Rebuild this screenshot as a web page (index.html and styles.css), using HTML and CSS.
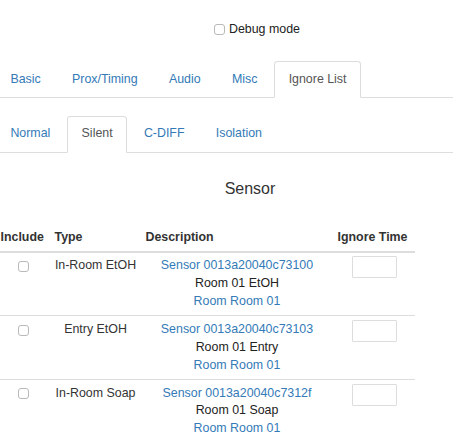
FILE: index.html
```html
<!DOCTYPE html>
<html lang="en">
<head>
<meta charset="utf-8">
<title>Ignore List</title>
<link rel="stylesheet" href="styles.css">
</head>
<body>
<div class="page">
  <label class="debug"><input type="checkbox" class="cb"><span>Debug mode</span></label>

  <ul class="tabs tabs-main">
    <li><a href="#">Basic</a></li>
    <li><a href="#">Prox/Timing</a></li>
    <li><a href="#">Audio</a></li>
    <li><a href="#">Misc</a></li>
    <li class="active"><a href="#">Ignore List</a></li>
  </ul>

  <ul class="tabs tabs-sub">
    <li><a href="#">Normal</a></li>
    <li class="active"><a href="#">Silent</a></li>
    <li><a href="#">C-DIFF</a></li>
    <li><a href="#">Isolation</a></li>
  </ul>

  <h3 class="title">Sensor</h3>

  <table class="sensors">
    <colgroup>
      <col class="c-inc"><col class="c-type"><col class="c-desc"><col class="c-time">
    </colgroup>
    <thead>
      <tr><th>Include</th><th>Type</th><th>Description</th><th>Ignore Time</th></tr>
    </thead>
    <tbody>
      <tr>
        <td><input type="checkbox" class="cb row-cb"></td>
        <td>In-Room EtOH</td>
        <td><a href="#">Sensor 0013a20040c73100</a><span class="line">Room 01 EtOH</span><a href="#">Room Room 01</a></td>
        <td><input type="text" class="time"></td>
      </tr>
      <tr>
        <td><input type="checkbox" class="cb row-cb"></td>
        <td>Entry EtOH</td>
        <td><a href="#">Sensor 0013a20040c73103</a><span class="line">Room 01 Entry</span><a href="#">Room Room 01</a></td>
        <td><input type="text" class="time"></td>
      </tr>
      <tr>
        <td><input type="checkbox" class="cb row-cb"></td>
        <td>In-Room Soap</td>
        <td><a href="#">Sensor 0013a20040c7312f</a><span class="line">Room 01 Soap</span><a href="#">Room Room 01</a></td>
        <td><input type="text" class="time"></td>
      </tr>
    </tbody>
  </table>
</div>
</body>
</html>
```

FILE: styles.css
```css
html, body {
  margin: 0;
  padding: 0;
  background: #fff;
}

body {
  font-family: "Liberation Sans", Arial, sans-serif;
  font-size: 12.4px;
  line-height: 17.8px;
  color: #333;
  overflow: hidden;
}

.page {
  margin-left: -4px;
}

a {
  color: #337ab7;
  text-decoration: none;
}

.cb {
  -webkit-appearance: none;
  appearance: none;
  width: 11px;
  height: 11px;
  margin: 0;
  border: 1px solid #b9b9b9;
  border-radius: 3px;
  background: #fff;
  box-sizing: border-box;
  flex: none;
}

.debug {
  display: flex;
  align-items: center;
  gap: 4px;
  padding: 21px 0 0 218px;
  line-height: 17px;
  color: #222;
}

.tabs {
  list-style: none;
  margin: 0;
  padding: 0;
  display: flex;
  border-bottom: 1px solid #ddd;
}

.tabs-main {
  margin-top: 23px;
}

.tabs-sub {
  margin-top: 18px;
}

.tabs li {
  margin-bottom: -1px;
  margin-right: 2.5px;
}

.tabs a {
  display: block;
  padding: 8.5px 13.4px;
  border: 1px solid transparent;
  border-radius: 3.5px 3.5px 0 0;
}

.tabs .active a {
  color: #555;
  background: #fff;
  border-color: #ddd #ddd transparent #ddd;
}

.title {
  margin: 25px 0 0;
  padding-left: 51px;
  text-align: center;
  font-size: 16px;
  line-height: 22px;
  font-weight: normal;
  color: #333;
}

.sensors {
  margin-top: 24.5px;
  width: 419px;
  table-layout: fixed;
  border-collapse: collapse;
  border-spacing: 0;
}

.c-inc { width: 54px; }
.c-type { width: 91px; }
.c-desc { width: 192px; }
.c-time { width: 82px; }

.sensors th {
  text-align: left;
  font-weight: bold;
  padding: 4.5px 4.5px;
  border-bottom: 2px solid #ddd;
  color: #333;
  white-space: nowrap;
}

.sensors td {
  text-align: center;
  vertical-align: top;
  padding: 4.6px 4.5px;
  border-top: 1px solid #ddd;
  white-space: nowrap;
}

.sensors tbody tr:first-child td {
  border-top: 0;
}

.sensors td a,
.sensors td .line {
  display: block;
}

.sensors td .line {
  color: #222;
}

.row-cb {
  display: block;
  margin: 3.5px auto 0;
}

.time {
  display: block;
  width: 45px;
  height: 22px;
  margin: -1px auto 0;
  padding: 0;
  border: 1px solid #ddd;
  border-radius: 1px;
  box-sizing: border-box;
  background: #fff;
}
```
